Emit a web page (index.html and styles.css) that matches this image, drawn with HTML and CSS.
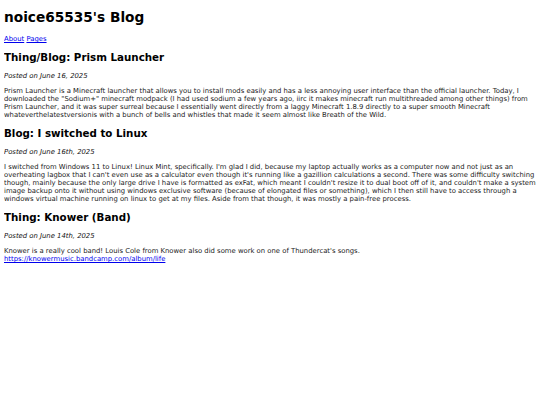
FILE: index.html
```html
<!DOCTYPE html>
<html>
<head>
<meta charset="utf-8">
<title>noice65535's Blog</title>
<link rel="stylesheet" href="styles.css">
</head>
<body class="page">
<h1 class="site-title">noice65535's Blog</h1>
<nav class="nav"><a href="#">About</a> <a href="#">Pages</a></nav>
<article class="post">
<h2 class="post-title">Thing/Blog: Prism Launcher</h2>
<p class="post-date"><em>Posted on June 16, 2025</em></p>
<p class="post-body">Prism Launcher is a Minecraft launcher that allows you to install mods easily and has a less annoying user interface than the official launcher. Today, I downloaded the "Sodium+" minecraft modpack (I had used sodium a few years ago, iirc it makes minecraft run multithreaded among other things) from Prism Launcher, and it was super surreal because I essentially went directly from a laggy Minecraft 1.8.9 directly to a super smooth Minecraft whateverthelatestversionis with a bunch of bells and whistles that made it seem almost like Breath of the Wild.</p>
</article>
<article class="post">
<h2 class="post-title">Blog: I switched to Linux</h2>
<p class="post-date"><em>Posted on June 16th, 2025</em></p>
<p class="post-body">I switched from Windows 11 to Linux! Linux Mint, specifically. I'm glad I did, because my laptop actually works as a computer now and not just as an overheating lagbox that I can't even use as a calculator even though it's running like a gazillion calculations a second. There was some difficulty switching though, mainly because the only large drive I have is formatted as exFat, which meant I couldn't resize it to dual boot off of it, and couldn't make a system image backup onto it without using windows exclusive software (because of elongated files or something), which I then still have to access through a windows virtual machine running on linux to get at my files. Aside from that though, it was mostly a pain-free process.</p>
</article>
<article class="post">
<h2 class="post-title">Thing: Knower (Band)</h2>
<p class="post-date"><em>Posted on June 14th, 2025</em></p>
<p class="post-body">Knower is a really cool band! Louis Cole from Knower also did some work on one of Thundercat's songs.<br><a href="#">https://knowermusic.bandcamp.com/album/life</a></p>
</article>
</body>
</html>
```
FILE: styles.css
```css
.page {
  margin: 4px;
  font-family: Verdana, "DejaVu Sans", sans-serif;
  font-size: 6.85px;
  color: #000;
  background: #fff;
}
.site-title {
  font-size: 13.7px;
  margin: 5px 0 10px;
}
.nav {
  margin-bottom: 8px;
}
.nav a, .post-body a {
  color: #00e;
}
.post-title {
  font-size: 10.3px;
  margin: 8px 0 9px;
}
.post-date {
  margin: 0 0 7px;
  color: #111;
}
.post-body {
  margin: 0 0 8px;
  color: #222;
}
```
